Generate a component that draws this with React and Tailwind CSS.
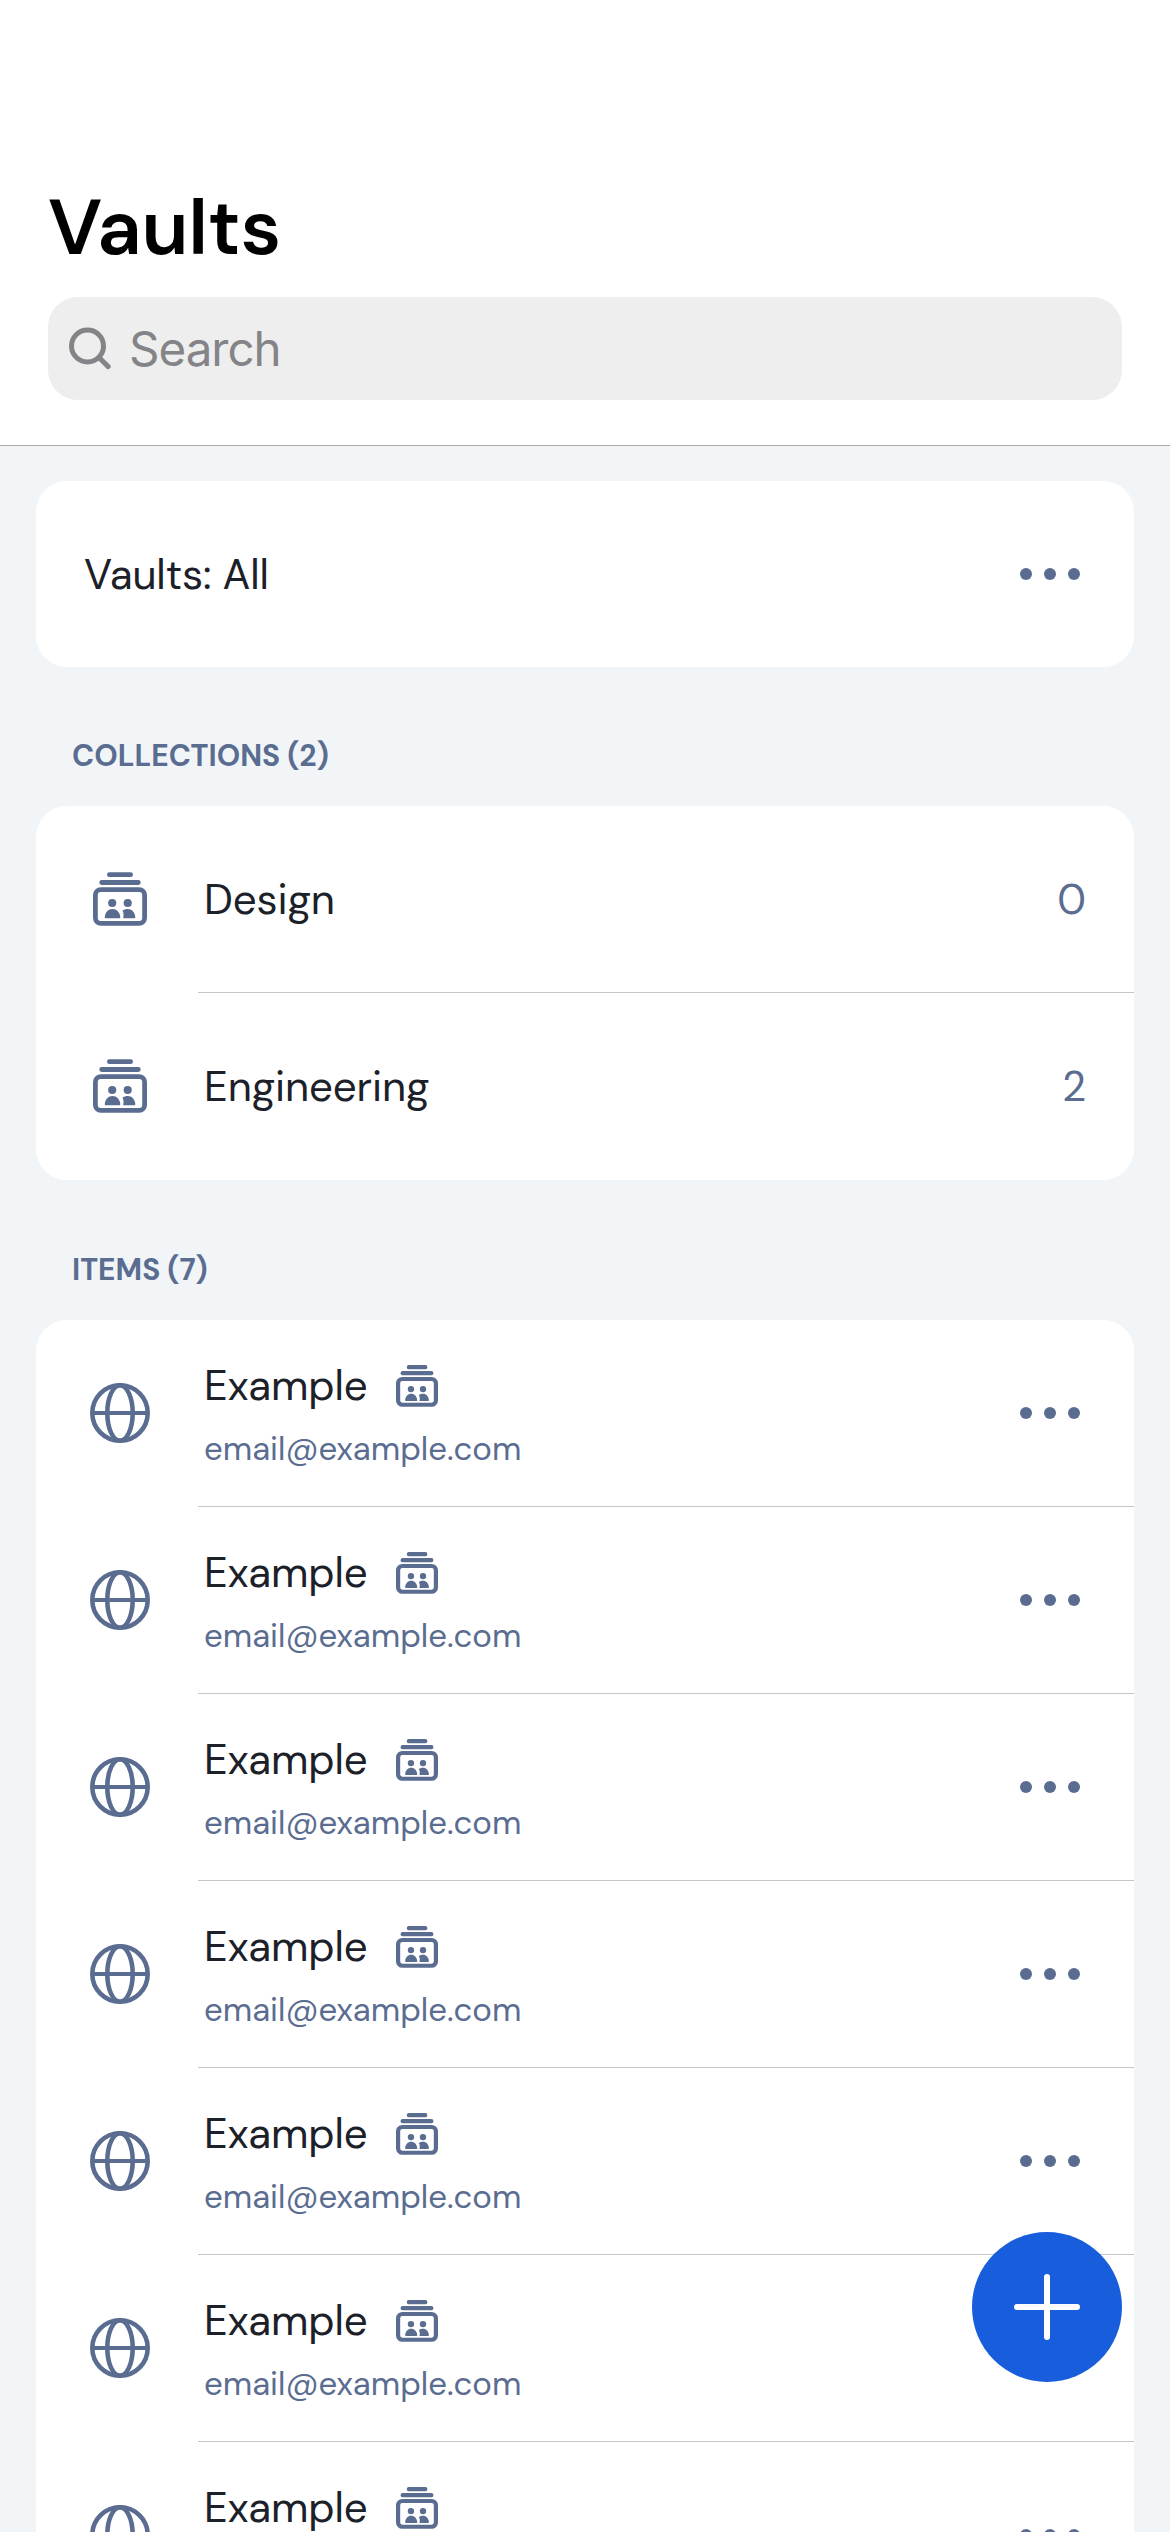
function CollectionIcon({ small = false, className }) {
  const stroke = small ? 5.4 : 4.8;
  return (
    <svg viewBox="0 0 54 54" fill="none" stroke="currentColor" className={className} aria-hidden="true">
      <path d={small ? "M16.5 2.8H37.7M8.5 10.5H45.5" : "M16.4 2.7H37.6M8.7 10.5H45.3"} strokeWidth={small ? 5.4 : 4.8} strokeLinecap="round" />
      <rect x={stroke / 2} y={15.3 + stroke / 2} width={54 - stroke} height={38.5 - stroke} rx="5.4" strokeWidth={stroke} />
      <g fill="currentColor" stroke="none">
        <circle cx="19.2" cy="31" r="4.1" />
        <circle cx="34.7" cy="31" r="4.1" />
        <path d="M13 46.2C12.2 46.2 11.7 45.7 11.8 44.9C12.2 40.3 15.3 37 19.5 37C23.7 37 26.9 40.3 27.3 44.9C27.4 45.7 26.9 46.2 26.1 46.2Z" />
        <path d="M29.4 38.6C30.9 37.6 32.9 37 34.8 37C38.9 37 41.9 40.3 42.3 44.9C42.4 45.7 41.9 46.2 41.1 46.2H30.2C30.7 43.4 30.8 41 29.4 38.6Z" />
      </g>
    </svg>
  );
}

function GlobeIcon({ className }) {
  return (
    <svg viewBox="0 0 60 60" fill="none" stroke="currentColor" className={className} aria-hidden="true">
      <circle cx="30" cy="30" r="27.7" strokeWidth="4.6" />
      <ellipse cx="30" cy="30" rx="12.7" ry="27.7" strokeWidth="4.6" />
      <path d="M2 30H58" strokeWidth="4.2" />
    </svg>
  );
}

function SearchIcon() {
  return (
    <svg viewBox="0 0 44 44" fill="none" stroke="currentColor" strokeWidth="5" strokeLinecap="round" className="size-11" aria-hidden="true">
      <circle cx="20.5" cy="19" r="16" />
      <path d="M32.3 30.8L41.2 39.6" />
    </svg>
  );
}

function MoreButton() {
  return (
    <button aria-label="More options" className="flex shrink-0 gap-3">
      <span className="size-3 rounded-full bg-[#5a6d91]" />
      <span className="size-3 rounded-full bg-[#5a6d91]" />
      <span className="size-3 rounded-full bg-[#5a6d91]" />
    </button>
  );
}

function SectionTitle({ className, children }) {
  return (
    <h2 className={`ml-9 h-[50px] text-[30px] leading-[50px] font-bold tracking-normal text-[#5a6d91] ${className}`}>
      {children}
    </h2>
  );
}

const collections = [
  { name: "Design", count: 0 },
  { name: "Engineering", count: 2 },
];

const items = Array.from({ length: 7 }, (_, id) => ({ id, name: "Example", login: "email@example.com" }));

export default function App() {
  return (
    <div className="relative flex h-[2532px] w-[1170px] flex-col overflow-hidden bg-[#f2f5f8] font-['DM_Sans',Inter,sans-serif] text-[42px] tracking-[-0.1px] text-[#1b2029]">
      <header className="h-[446px] shrink-0 border-b border-[#a9abad] bg-white px-12 pt-[178px]">
        <h1 className="h-[100px] text-[78px] leading-[100px] font-semibold tracking-[-0.3px] text-black">Vaults</h1>
        <div className="mt-[19px] flex h-[103px] items-center rounded-[30px] bg-[#eeeeee] pl-[19px] text-[#848488]">
          <SearchIcon />
          <span className="mt-px ml-[18px] font-[Inter,sans-serif] text-[47.5px] tracking-[-1px]">Search</span>
        </div>
      </header>

      <main className="px-9 pt-[35px]">
        <section className="flex h-[186px] items-center justify-between rounded-[31px] bg-white pr-[54px] pl-12">
          <span>Vaults: All</span>
          <MoreButton />
        </section>

        <SectionTitle className="mt-16">COLLECTIONS (2)</SectionTitle>
        <section className="mt-[25px] rounded-[31px] bg-white">
          {collections.map((c) => (
            <div key={c.name} className="group flex h-[187px] items-center pl-[57px]">
              <CollectionIcon className="-mt-px size-[54px] shrink-0 text-[#5a6d91]" />
              <div className="ml-[51px] flex h-full flex-1 items-center justify-between border-b border-[#c6c6c8] pr-12 pl-[6px] group-last:border-transparent">
                <span>{c.name}</span>
                <span className="text-[#5a6d91]">{c.count}</span>
              </div>
            </div>
          ))}
        </section>

        <SectionTitle className="mt-[65px]">ITEMS (7)</SectionTitle>
        <section className="mt-[25px] rounded-[31px] bg-white">
          {items.map((item) => (
            <div key={item.id} className="group flex h-[187px] items-center pl-[54px]">
              <GlobeIcon className="-mt-px size-[60px] shrink-0 text-[#5a6d91]" />
              <div className="ml-12 flex h-full flex-1 items-center justify-between border-b border-[#c6c6c8] pr-[54px] pl-[6px] group-last:border-transparent">
                <div className="mt-1">
                  <div className="flex h-[50px] items-center leading-[50px]">
                    <span>{item.name}</span>
                    <CollectionIcon small className="ml-7 size-[42px] text-[#5a6d91]" />
                  </div>
                  <div className="mt-[18px] h-10 text-[33px] leading-10 tracking-normal text-[#5a6d91]">{item.login}</div>
                </div>
                <MoreButton />
              </div>
            </div>
          ))}
        </section>
      </main>

      <button aria-label="Add item" className="absolute top-[2232px] left-[972px] flex size-[150px] items-center justify-center rounded-full bg-[#175ddc]">
        <svg viewBox="0 0 66 66" fill="none" stroke="white" strokeWidth="6" strokeLinecap="round" className="size-[66px]" aria-hidden="true">
          <path d="M33 3V63M3 33H63" />
        </svg>
      </button>
    </div>
  );
}
